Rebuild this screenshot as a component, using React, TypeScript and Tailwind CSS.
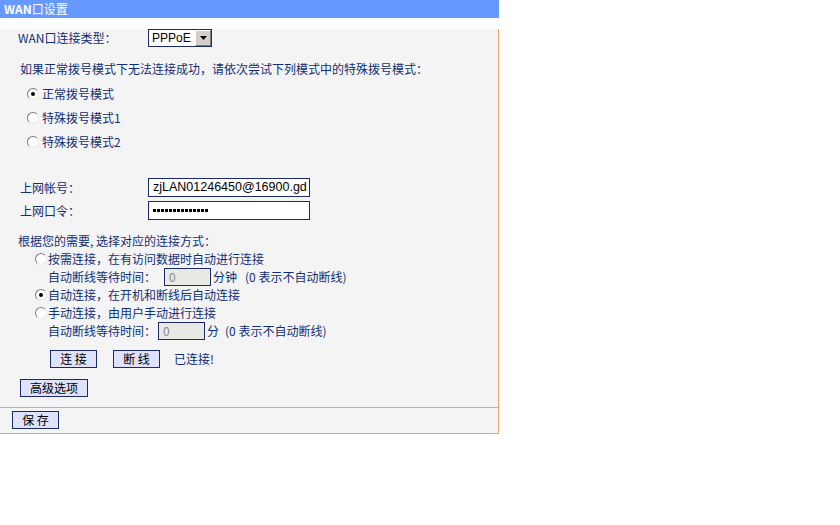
import React from 'react';

const font = { fontFamily: '"Noto Sans CJK SC", "Liberation Sans", sans-serif' };
const latin = { fontFamily: '"Liberation Sans", Arial, sans-serif' };

function Radio({ checked }: { checked?: boolean }) {
  return (
    <span className="relative inline-block w-[12px] h-[12px] rounded-full bg-white border border-t-[#7a7a7a] border-l-[#7a7a7a] border-b-[#e6e6e6] border-r-[#e6e6e6] shrink-0">
      {checked && (
        <span className="absolute left-[3px] top-[3px] w-[4px] h-[4px] rounded-full bg-black" />
      )}
    </span>
  );
}

function Btn({ label, w }: { label: string; w: string }) {
  return (
    <div
      className={`${w} h-[18px] bg-[#dfe2fa] border border-[#1c2a6c] text-black text-[12px] leading-[16px] flex items-center justify-center whitespace-pre`}
    >
      {label}
    </div>
  );
}

export default function App() {
  return (
    <div className="w-[840px] h-[525px] bg-white text-[12px] text-[#102f74]" style={font}>
      <div className="w-[499px] h-[18px] bg-[#6699ff] text-white leading-[18px] pl-[4px]">
        <span className="font-bold">WAN</span>口设置
      </div>

      <div className="w-[499px] bg-[#f4f4f4] border-r border-r-[#f0a25c] border-b border-b-[#f0a25c] pb-[10px]">
        <div className="flex items-center h-[18px] mt-[11px] pl-[18px]">
          <span className="w-[130px]">WAN口连接类型：</span>
          <div className="w-[64px] h-[18px] border border-[#1c2a6c] bg-white flex items-center">
            <span className="flex-1 pl-[3px] text-black text-[12px] leading-[16px]" style={latin}>
              PPPoE
            </span>
            <span className="w-[16px] h-[16px] bg-[#d4d0c8] border border-t-white border-l-white border-b-[#808080] border-r-[#808080] flex items-center justify-center">
              <svg width="7" height="4" viewBox="0 0 7 4">
                <path d="M0 0h7L3.5 4z" fill="#000" />
              </svg>
            </span>
          </div>
        </div>

        <div className="h-[18px] leading-[18px] mt-[13px] pl-[20px]">
          如果正常拨号模式下无法连接成功，请依次尝试下列模式中的特殊拨号模式：
        </div>

        <div className="mt-[4px] pl-[27px]">
          <div className="flex items-center gap-[3px] h-[24px]">
            <Radio checked />
            <span>正常拨号模式</span>
          </div>
          <div className="flex items-center gap-[3px] h-[24px]">
            <Radio />
            <span>特殊拨号模式1</span>
          </div>
          <div className="flex items-center gap-[3px] h-[24px]">
            <Radio />
            <span>特殊拨号模式2</span>
          </div>
        </div>

        <div className="mt-[24px] pl-[20px] flex flex-col gap-[4px]">
          <div className="flex items-center h-[19px]">
            <span className="w-[128px]">上网帐号：</span>
            <div
              className="w-[162px] h-[19px] border border-[#1c2a6c] bg-white text-black text-[12.5px] leading-[17px] pl-[4px] overflow-hidden whitespace-nowrap"
              style={latin}
            >
              zjLAN01246450@16900.gd
            </div>
          </div>
          <div className="flex items-center h-[19px]">
            <span className="w-[128px]">上网口令：</span>
            <div className="w-[162px] h-[19px] border border-[#1c2a6c] bg-white flex items-center gap-[1px] pl-[4px]">
              {Array.from({ length: 14 }).map((_, i) => (
                <span key={i} className="w-[3px] h-[3px] bg-black" />
              ))}
            </div>
          </div>
        </div>

        <div className="h-[18px] leading-[18px] mt-[12px] pl-[18px]">根据您的需要, 选择对应的连接方式：</div>

        <div className="pl-[35px]">
          <div className="flex items-center gap-[1px] h-[18px]">
            <Radio />
            <span>按需连接，在有访问数据时自动进行连接</span>
          </div>
          <div className="flex items-center h-[18px] pl-[13px]">
            <span className="w-[116px]">自动断线等待时间：</span>
            <div className="w-[47px] h-[18px] border border-[#1c2a6c] bg-[#e8e8e4] text-[#8a8a8a] leading-[16px] pl-[4px]">0</div>
            <span className="ml-[2px]">分钟</span>
            <span className="ml-[8px]">(0 表示不自动断线)</span>
          </div>
          <div className="flex items-center gap-[1px] h-[18px]">
            <Radio checked />
            <span>自动连接，在开机和断线后自动连接</span>
          </div>
          <div className="flex items-center gap-[1px] h-[18px]">
            <Radio />
            <span>手动连接，由用户手动进行连接</span>
          </div>
          <div className="flex items-center h-[18px] pl-[13px]">
            <span className="w-[110px]">自动断线等待时间：</span>
            <div className="w-[47px] h-[18px] border border-[#1c2a6c] bg-[#e8e8e4] text-[#8a8a8a] leading-[16px] pl-[4px]">0</div>
            <span className="ml-[2px]">分</span>
            <span className="ml-[6px]">(0 表示不自动断线)</span>
          </div>
        </div>

        <div className="flex items-center h-[18px] mt-[10px] pl-[50px]">
          <Btn label="连 接" w="w-[47px]" />
          <div className="ml-[16px]">
            <Btn label="断 线" w="w-[47px]" />
          </div>
          <span className="ml-[14px]">已连接!</span>
        </div>

        <div className="mt-[11px] pl-[20px]">
          <Btn label="高级选项" w="w-[68px]" />
        </div>
      </div>

      <div className="w-[499px] bg-[#f4f4f4] border-r border-r-[#f0a25c] border-b border-b-[#f0a25c] pt-[3px] pb-[4px] pl-[12px]">
        <Btn label="保 存" w="w-[47px]" />
      </div>
    </div>
  );
}
